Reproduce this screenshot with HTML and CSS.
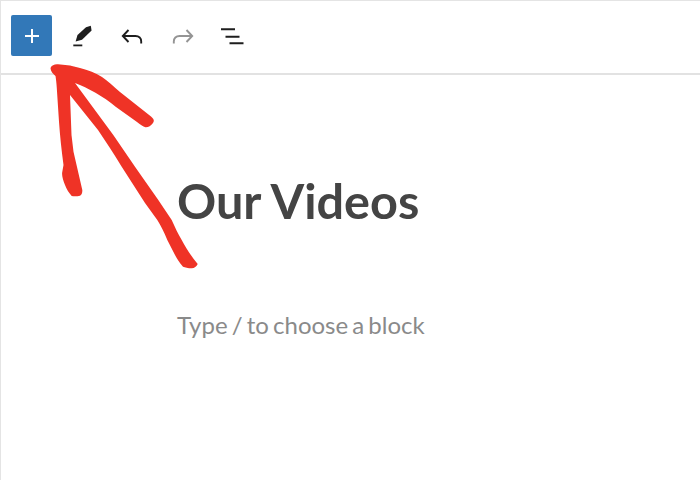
FILE: index.html
```html
<!DOCTYPE html>
<html lang="en">
<head>
<meta charset="utf-8">
<title>Our Videos</title>
<link rel="stylesheet" href="styles.css">
</head>
<body>
<div class="frame">
  <header class="toolbar">
    <button class="add" aria-label="Add block">
      <svg width="16" height="16" viewBox="0 0 16 16"><path d="M8 1v14M1 8h14" stroke="#fff" stroke-width="2"/></svg>
    </button>
    <div class="tools">
      <span class="tool"><svg width="24" height="24" viewBox="0 0 24 24"><path d="M4.600 17.400 6.500 11 15 3.200 19.800 1.800 20.600 6.400 11 15.800Z" fill="#1e1e1e"/><path d="M2.300 21.400h9" stroke="#1e1e1e" stroke-width="1.800"/></svg></span>
      <span class="tool"><svg width="24" height="24" viewBox="0 0 24 24"><path d="M7.500 6 1.800 12l5.700 6M2 12h12.500c3.500 0 5.700 2.300 5.700 5.500v2" fill="none" stroke="#1e1e1e" stroke-width="1.900"/></svg></span>
      <span class="tool"><svg width="24" height="24" viewBox="0 0 24 24"><path d="M15.500 6l5.700 6-5.700 6M21 12H8.500C5 12 2.800 14.300 2.800 17.500v2" fill="none" stroke="#949494" stroke-width="1.900"/></svg></span>
      <span class="tool"><svg width="24" height="24" viewBox="0 0 24 24"><path d="M0 5.300h14M4.500 12.700h14M8.500 19.300h14" fill="none" stroke="#1e1e1e" stroke-width="2"/></svg></span>
    </div>
  </header>
  <main class="content">
    <h1 class="title">Our Videos</h1>
    <p class="placeholder">Type / to choose a block</p>
  </main>
  <svg class="arrow" width="700" height="480" viewBox="0 0 700 480"><path fill="#ef3326" d="M50.500 68C51.500 65 55 64 58 64.300L70 65.500 80 68C88 70 96 73 102 77 108 81 113 86 120 92L151 116.500C154 119 154.500 121 153 123 151 126 148 127.500 145.500 127.300 143 126.500 140 124.500 137 122L116 107C103 96 88 88 75 83L113.300 135 135 166.700 158.300 200 171.700 220C175 227 178 234 181.700 240 186 248 191 256 197.700 264 196.500 266.500 194.500 268.300 191.700 268.300 188 268.300 185 267.500 183 266.700 179 262 177 259 175 255L167.300 240C164 232 161 226 157.300 220L145 203 121.700 166.700C114 154 106 142 98 130L70 95 71.500 135 73.500 151.700 82.300 190C82.500 192.500 81.500 195 80 195.700 77 196.500 74 196.500 71.700 196 69 193 66.500 189 65 185 63 180 61.500 175 62.300 171.700L63.500 165C61.500 150 60 136 59 121.700L56.800 88.300C56.500 83 56 79 55.500 76 53 74 50.500 71 50.500 68Z"/></svg>
</div>
</body>
</html>
```
FILE: styles.css
```css
* { box-sizing: border-box; }
html, body { margin: 0; padding: 0; background: #fff; }
.frame {
  position: relative;
  width: 700px;
  height: 480px;
  border-top: 1px solid #e4e4e4;
  border-left: 1px solid #e4e4e4;
  overflow: hidden;
}
.toolbar {
  display: flex;
  align-items: center;
  height: 74px;
  padding: 0 0 3px 10px;
  border-bottom: 2px solid #e2e2e2;
}
.add {
  display: flex;
  align-items: center;
  justify-content: center;
  width: 41px;
  height: 41px;
  padding: 0;
  border: 0;
  border-radius: 2px;
  background: #3278b8;
}
.tools { display: flex; gap: 26px; margin-left: 19px; }
.tool { display: block; width: 24px; height: 24px; }
.tool svg { display: block; }
.content {
  padding-left: 176px;
  font-family: Lato, "Open Sans", sans-serif;
}
.title {
  margin: 95px 0 0;
  font-size: 48.600px;
  line-height: 60px;
  font-weight: 700;
  color: #444;
}
.placeholder {
  margin: 80px 0 0;
  font-size: 24px;
  line-height: 30px;
  word-spacing: -2px;
  color: #8a8a8a;
}
.arrow { position: absolute; left: -1px; top: -1px; }
```
